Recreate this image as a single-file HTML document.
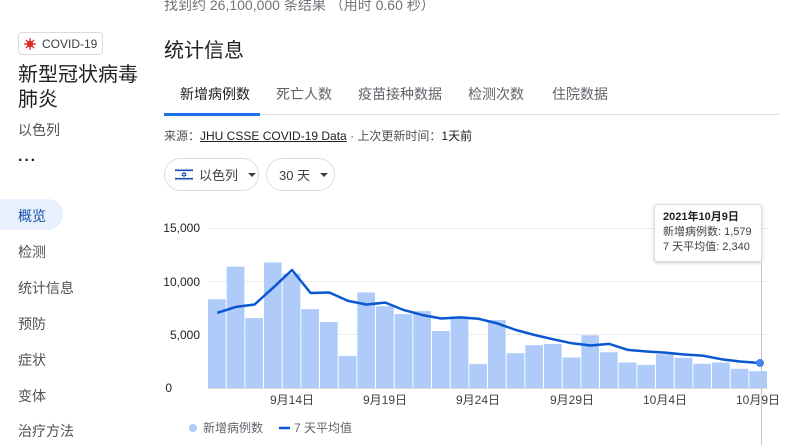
<!DOCTYPE html>
<html><head><meta charset="utf-8"><style>
*{margin:0;padding:0;box-sizing:border-box}
body{width:800px;height:445px;overflow:hidden;background:#fff;font-family:"Liberation Sans","Noto Sans CJK SC",sans-serif;color:#202124;position:relative}
.a{position:absolute;white-space:nowrap}
.nav{font-size:14px;color:#4d5156;left:18px}
.tab{font-size:14px;color:#5f6368;top:84px}
.pill{position:absolute;top:158px;height:33px;border:1px solid #dadce0;border-radius:17px;font-size:13px;color:#3c4043;display:flex;align-items:center}
.caret{display:inline-block;width:0;height:0;border-left:4px solid transparent;border-right:4px solid transparent;border-top:4px solid #3c4043;margin-left:10px}
</style></head><body>
<div class="a" style="left:164px;top:-5px;font-size:14px;color:#70757a">找到约 26,100,000 条结果 （用时 0.60 秒）</div>

<div class="a" style="left:18px;top:32px;width:85px;height:23px;border:1px solid #dadce0;border-radius:4px;font-size:12px;color:#3c4043;padding:4px 0 0 23px">COVID-19</div>
<svg class="a" style="left:24px;top:38px" width="12" height="12" viewBox="0 0 12 12"><g stroke="#d93025" stroke-width="1.3"><line x1="6" y1="0" x2="6" y2="12"/><line x1="0" y1="6" x2="12" y2="6"/><line x1="1.8" y1="1.8" x2="10.2" y2="10.2"/><line x1="10.2" y1="1.8" x2="1.8" y2="10.2"/></g><circle cx="6" cy="6" r="3.3" fill="#d93025"/></svg>
<div class="a" style="left:18px;top:63px;font-size:20px;line-height:25px;color:#202124">新型冠状病毒<br>肺炎</div>
<div class="a" style="left:18px;top:120px;font-size:14px;color:#4d5156">以色列</div>
<div class="a" style="left:18px;top:152px;font-size:16px;font-weight:bold;letter-spacing:1px">···</div>

<div class="a" style="left:-20px;top:199px;width:83px;height:31px;background:#e8f0fe;border-radius:0 16px 16px 0"></div>
<div class="a nav" style="top:206px;color:#174ea6">概览</div>
<div class="a nav" style="top:242px">检测</div>
<div class="a nav" style="top:278px">统计信息</div>
<div class="a nav" style="top:314px">预防</div>
<div class="a nav" style="top:350px">症状</div>
<div class="a nav" style="top:386px">变体</div>
<div class="a nav" style="top:421px">治疗方法</div>

<div class="a" style="left:164px;top:34px;font-size:20px;color:#202124">统计信息</div>
<div class="a tab" style="left:180px;color:#202124">新增病例数</div>
<div class="a tab" style="left:276px">死亡人数</div>
<div class="a tab" style="left:358px">疫苗接种数据</div>
<div class="a tab" style="left:468px">检测次数</div>
<div class="a tab" style="left:552px">住院数据</div>
<div class="a" style="left:164px;top:114px;width:616px;height:1px;background:#e0e0e0"></div>
<div class="a" style="left:164px;top:113px;width:96px;height:3px;background:#1a73e8"></div>

<div class="a" style="left:164px;top:127px;font-size:12px;color:#4d5156">来源：<span style="color:#202124;text-decoration:underline">JHU CSSE COVID-19 Data</span> · 上次更新时间：<span style="color:#202124">1天前</span></div>

<div class="pill" style="left:164px;width:95px;padding-left:10px">
<svg width="18" height="13" viewBox="0 0 18 13" style="margin-right:6px"><rect width="18" height="13" fill="#fff" stroke="#ddd" stroke-width=".5"/><rect y="1.5" width="18" height="1.6" fill="#1c49b8"/><rect y="9.9" width="18" height="1.6" fill="#1c49b8"/><path d="M9 4.2 11 7.6 7 7.6Z M9 8.8 7 5.4 11 5.4Z" fill="none" stroke="#1c49b8" stroke-width=".7"/></svg>以色列<span class="caret"></span></div>
<div class="pill" style="left:266px;width:69px;padding-left:12px">30 天<span class="caret"></span></div>

<svg class="a" style="left:0;top:0" width="800" height="445">
<g stroke="#ececec" stroke-width="1"><line x1="208" y1="228.5" x2="768" y2="228.5"/><line x1="208" y1="281.5" x2="768" y2="281.5"/><line x1="208" y1="334.5" x2="768" y2="334.5"/></g>
<g font-size="12" fill="#202124" text-anchor="end" font-family="Liberation Sans,sans-serif">
<text x="200" y="232">15,000</text><text x="200" y="286">10,000</text><text x="200" y="339">5,000</text><text x="172" y="392">0</text></g>
<g fill="#aecbfa">
<rect x="208" y="299.3" width="17.7" height="88.7"/>
<rect x="226.7" y="266.7" width="17.7" height="121.3"/>
<rect x="245.3" y="318.1" width="17.7" height="69.9"/>
<rect x="264" y="262.5" width="17.7" height="125.5"/>
<rect x="282.7" y="273.7" width="17.7" height="114.3"/>
<rect x="301.3" y="309.2" width="17.7" height="78.8"/>
<rect x="320" y="322.1" width="17.7" height="65.9"/>
<rect x="338.7" y="355.9" width="17.7" height="32.1"/>
<rect x="357.3" y="292.5" width="17.7" height="95.5"/>
<rect x="376" y="306.2" width="17.7" height="81.8"/>
<rect x="394.7" y="314.1" width="17.7" height="73.9"/>
<rect x="413.3" y="311.1" width="17.7" height="76.9"/>
<rect x="432" y="331" width="17.7" height="57"/>
<rect x="450.7" y="316.4" width="17.7" height="71.6"/>
<rect x="469.3" y="364.1" width="17.7" height="23.9"/>
<rect x="488" y="320.1" width="17.7" height="67.9"/>
<rect x="506.7" y="353.2" width="17.7" height="34.8"/>
<rect x="525.3" y="345.2" width="17.7" height="42.8"/>
<rect x="544" y="343.9" width="17.7" height="44.1"/>
<rect x="562.7" y="357.5" width="17.7" height="30.5"/>
<rect x="581.3" y="335.3" width="17.7" height="52.7"/>
<rect x="600" y="352.3" width="17.7" height="35.7"/>
<rect x="618.7" y="362.5" width="17.7" height="25.5"/>
<rect x="637.3" y="364.9" width="17.7" height="23.1"/>
<rect x="656" y="354.2" width="17.7" height="33.8"/>
<rect x="674.7" y="357.8" width="17.7" height="30.2"/>
<rect x="693.3" y="363.8" width="17.7" height="24.2"/>
<rect x="712" y="362.5" width="17.7" height="25.5"/>
<rect x="730.7" y="368.8" width="17.7" height="19.2"/>
<rect x="749.3" y="371.2" width="17.7" height="16.8"/>
</g>
<line x1="208" y1="388.5" x2="768" y2="388.5" stroke="#dadce0"/>
<line x1="761.5" y1="262" x2="761.5" y2="445" stroke="#c8c8c8"/>
<polyline fill="none" stroke="#0b57d0" stroke-width="2.5" stroke-linejoin="round" points="217.3,312.8 236,306.9 254.6,304.5 273.3,287.6 292,270 310.6,293 329.3,292.5 348,300.9 366.6,304.5 385.3,302.6 404,310.1 422.6,315.1 441.3,318.5 460,317.4 478.6,318.8 497.3,323.4 516,330 534.6,335 553.3,339.3 572,343.3 590.6,345.5 609.3,343.9 628,349.9 646.6,351.5 665.3,352.6 684,354.5 702.6,355.6 721.3,359.2 740,361.5 760,363"/>
<circle cx="760" cy="363" r="4" fill="#4285f4"/>
<g font-size="12" fill="#3c4043" text-anchor="middle" font-family="Liberation Sans,Noto Sans CJK SC,sans-serif">
<text x="292" y="404">9月14日</text><text x="385" y="404">9月19日</text><text x="478" y="404">9月24日</text><text x="572" y="404">9月29日</text><text x="665" y="404">10月4日</text><text x="758" y="404">10月9日</text></g>
<circle cx="193" cy="428" r="4" fill="#aecbfa"/>
<line x1="279" y1="428" x2="290" y2="428" stroke="#0b57d0" stroke-width="2.5"/>
<g font-size="12" fill="#5f6368" font-family="Liberation Sans,Noto Sans CJK SC,sans-serif"><text x="203" y="432">新增病例数</text><text x="294" y="432">7 天平均值</text></g>
</svg>

<div class="a" style="left:654px;top:204px;width:108px;height:58px;background:#fff;border:1px solid #dadce0;box-shadow:0 1px 3px rgba(0,0,0,.2);border-radius:3px;font-size:11px;line-height:15px;padding:5px 0 0 8px;color:#3c4043">
<b style="color:#202124">2021年10月9日</b><br>新增病例数: 1,579<br>7 天平均值: 2,340</div>
</body></html>
